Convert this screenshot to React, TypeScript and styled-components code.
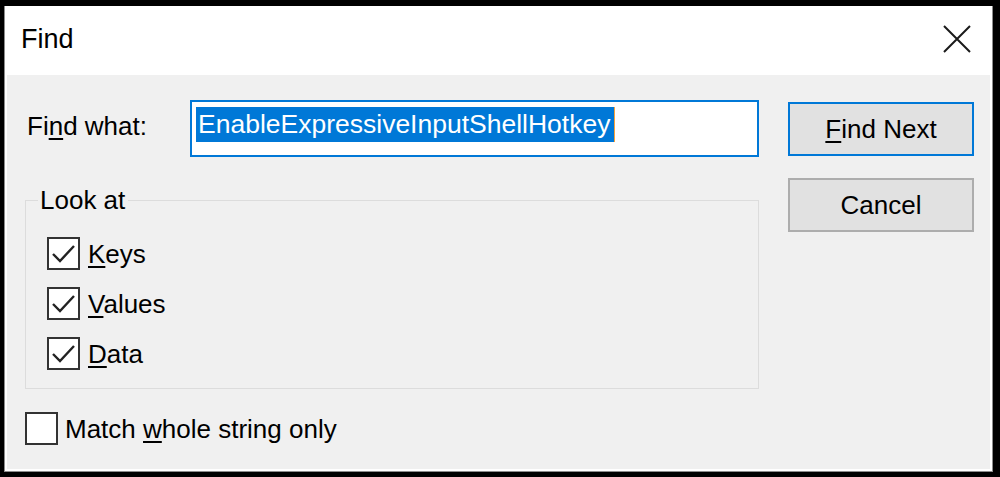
import React from 'react';
import styled, { createGlobalStyle } from 'styled-components';

const GlobalStyle = createGlobalStyle`
  html, body {
    margin: 0;
    padding: 0;
    background: #000;
  }

  body {
    font-family: "Liberation Sans", Arial, sans-serif;
    color: #000;
  }
`;

const Frame = styled('div')`
  width: 1000px;
  height: 477px;
  box-sizing: border-box;
  border-style: solid;
  border-color: #000;
  border-width: 6px 7px 5px 4px;
  background: #000;
`;

const Dialog = styled('div')`
  height: 100%;
  box-sizing: border-box;
  display: flex;
  flex-direction: column;
  background: #fff;
  border: 1px solid #8c8c8c;
  border-top: none;
  padding: 0 2px 2px;
`;

const TitleBar = styled('div')`
  height: 69px;
  flex: none;
  display: flex;
  align-items: center;
  justify-content: space-between;
  box-sizing: border-box;
  padding: 0 18px 4px 14px;
  font-size: 27px;
  line-height: 30px;
`;

const CloseButton = styled('button')`
  width: 30px;
  height: 30px;
  margin: 0;
  padding: 0;
  border: none;
  background: none;
  display: flex;
  align-items: center;
  justify-content: center;
`;

const Body = styled('div')`
  flex: 1;
  display: flex;
  align-items: flex-start;
  background: #f0f0f0;
  padding: 25px 16px 0 18px;
`;

const LeftColumn = styled('div')`
  width: 734px;
  display: flex;
  flex-direction: column;
`;

const FindRow = styled('div')`
  display: flex;
  align-items: flex-start;
`;

const FieldLabel = styled('label')`
  width: 165px;
  box-sizing: border-box;
  padding: 11px 0 0 2px;
  font-size: 26px;
  line-height: 30px;
`;

const TextBox = styled('div')`
  width: 569px;
  height: 57px;
  box-sizing: border-box;
  border: 2px solid #0078d7;
  background: #fff;
  padding: 5px 4px;
`;

const Selection = styled('span')`
  display: inline-block;
  background: #0078d7;
  color: #fff;
  font-size: 26.5px;
  line-height: 35px;
  padding: 0 4px 0 2px;
  border-right: 1px solid #f7a23b;
`;

const GroupBox = styled('fieldset')`
  margin: 28px 0 0;
  padding: 0 0 18px 12px;
  min-width: 0;
  width: 100%;
  box-sizing: border-box;
  border: 1px solid #dcdcdc;
`;

const GroupLegend = styled('legend')`
  padding: 0 3px 0 2px;
  font-size: 26px;
  line-height: 30px;
`;

const OptionList = styled('div')`
  display: flex;
  flex-direction: column;
  gap: 17px;
  padding: 22px 0 0 9px;
`;

const OptionRow = styled('label')<{ $gap?: number }>`
  display: flex;
  align-items: center;
  gap: ${p => p.$gap ?? 8}px;
  height: 33px;
  font-size: 26px;
  line-height: 30px;
`;

const MatchRow = styled(OptionRow)`
  margin-top: 23px;
`;

const Box = styled('span')`
  width: 33px;
  height: 33px;
  box-sizing: border-box;
  flex: none;
  display: flex;
  align-items: center;
  justify-content: center;
  border: 2px solid #333;
  background: #fff;
`;

const Key = styled('u')`
  text-decoration-thickness: 2px;
  text-underline-offset: 3px;
`;

const ButtonColumn = styled('div')`
  width: 186px;
  margin-left: 29px;
  padding-top: 2px;
  display: flex;
  flex-direction: column;
  gap: 22px;
`;

const DialogButton = styled('button')<{ $primary?: boolean }>`
  height: 54px;
  margin: 0;
  padding: 0;
  box-sizing: border-box;
  border: 2px solid ${p => (p.$primary ? '#0078d7' : '#adadad')};
  background: #e1e1e1;
  color: #000;
  font-family: inherit;
  font-size: 26px;
  line-height: 30px;
`;

const CheckBox: React.FC<{ checked?: boolean }> = ({ checked }) => (
  <Box>
    {checked && (
      <svg width="29" height="29" viewBox="0 0 29 29">
        <polyline points="4,15 11,22 25,7" fill="none" stroke="#222" strokeWidth="2.4" />
      </svg>
    )}
  </Box>
);

const options = [
  { key: 'K', rest: 'eys' },
  { key: 'V', rest: 'alues' },
  { key: 'D', rest: 'ata' },
];

export default function App() {
  return (
    <Frame>
      <GlobalStyle />
      <Dialog>
        <TitleBar>
          <span>Find</span>
          <CloseButton aria-label="Close">
            <svg width="28" height="28" viewBox="0 0 28 28">
              <path d="M1 1 L27 27 M27 1 L1 27" stroke="#1a1a1a" strokeWidth="2" />
            </svg>
          </CloseButton>
        </TitleBar>
        <Body>
          <LeftColumn>
            <FindRow>
              <FieldLabel>
                Fi<Key>n</Key>d what:
              </FieldLabel>
              <TextBox>
                <Selection>EnableExpressiveInputShellHotkey</Selection>
              </TextBox>
            </FindRow>
            <GroupBox>
              <GroupLegend>Look at</GroupLegend>
              <OptionList>
                {options.map(o => (
                  <OptionRow key={o.key}>
                    <CheckBox checked />
                    <span>
                      <Key>{o.key}</Key>
                      {o.rest}
                    </span>
                  </OptionRow>
                ))}
              </OptionList>
            </GroupBox>
            <MatchRow $gap={7}>
              <CheckBox />
              <span>
                Match <Key>w</Key>hole string only
              </span>
            </MatchRow>
          </LeftColumn>
          <ButtonColumn>
            <DialogButton $primary>
              <Key>F</Key>ind Next
            </DialogButton>
            <DialogButton>Cancel</DialogButton>
          </ButtonColumn>
        </Body>
      </Dialog>
    </Frame>
  );
}
